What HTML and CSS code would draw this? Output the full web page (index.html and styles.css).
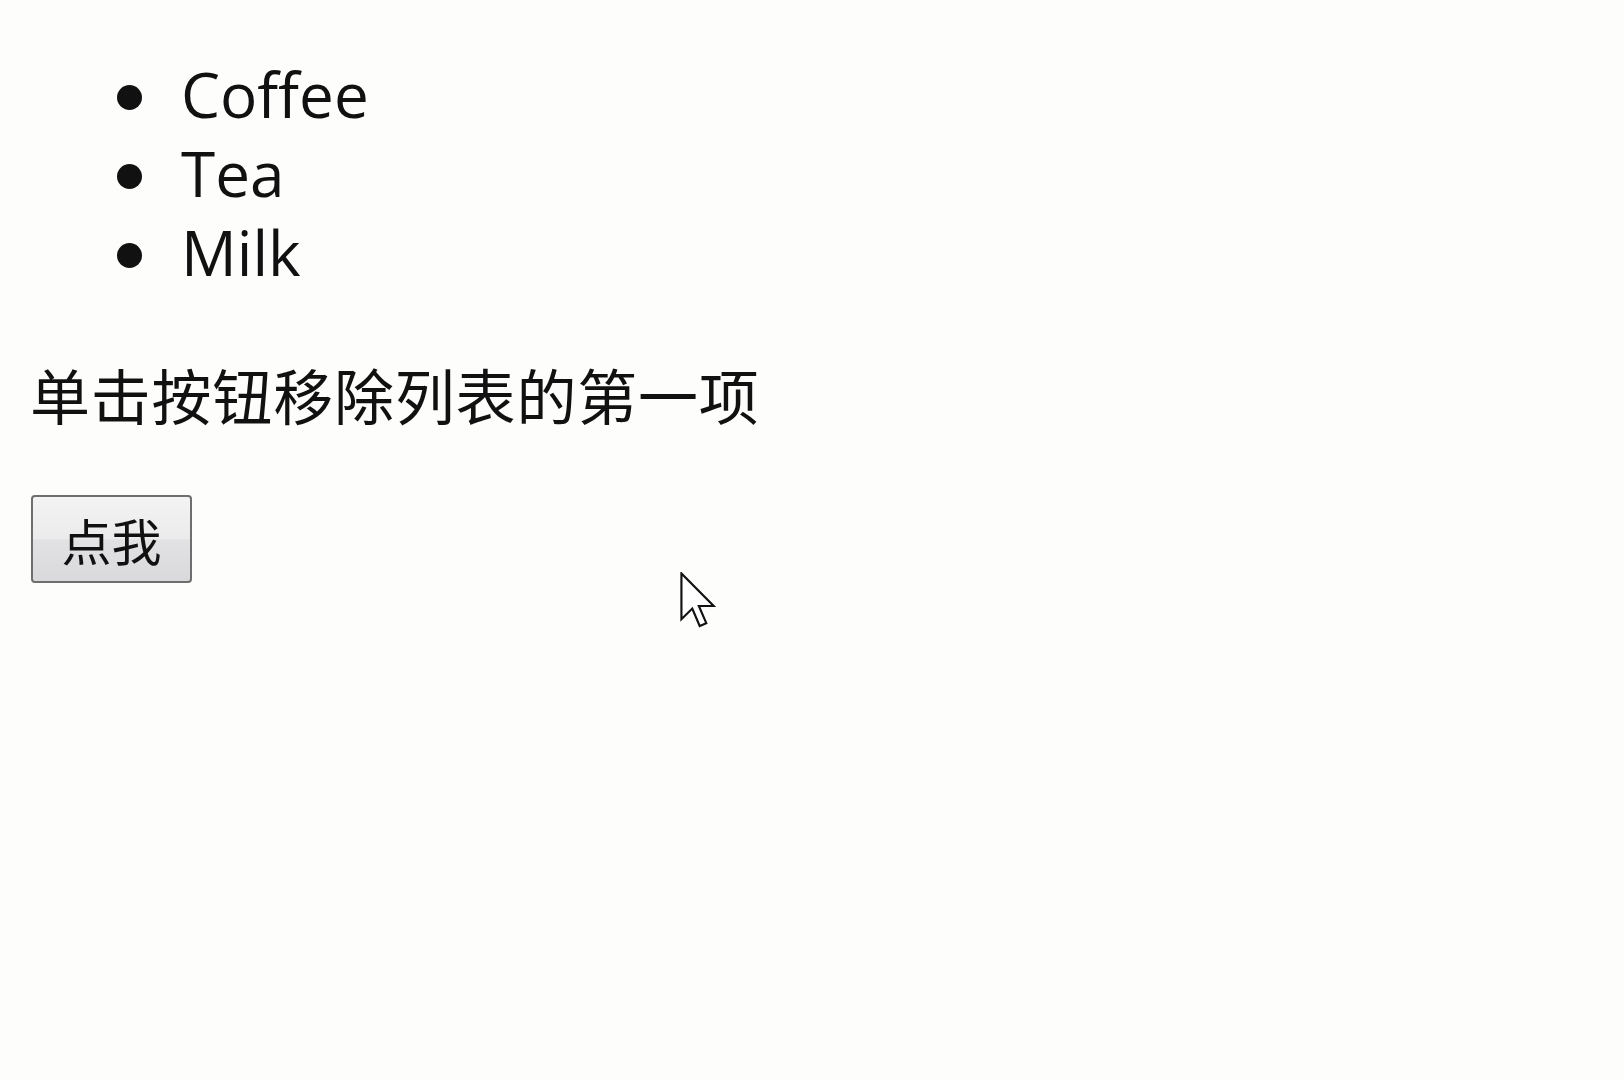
FILE: index.html
```html
<!DOCTYPE html>
<html lang="zh-CN">
<head>
<meta charset="utf-8">
<title>移除列表项</title>
<link rel="stylesheet" href="styles.css">
</head>
<body>
<ul class="drinks">
  <li>Coffee</li>
  <li>Tea</li>
  <li>Milk</li>
</ul>
<p class="hint">单击按钮移除列表的第一项</p>
<button class="btn" type="button">点我</button>
<svg class="cursor" width="36" height="56" viewBox="0 0 12.6 19.6" aria-hidden="true">
  <path d="M0.5 0.5 L0.5 16.5 L4.3 12.8 L6.9 18.9 L9.2 17.9 L6.6 11.9 L11.8 11.9 Z" fill="#ffffff" stroke="#111111" stroke-width="0.75" stroke-linejoin="miter"/>
</svg>
</body>
</html>
```

FILE: styles.css
```css
html {
  background-color: #fdfdfb;
  min-height: 100%;
}

body {
  margin: 0;
  padding: 55px 30px 0;
  font-family: "Open Sans", "Noto Sans CJK SC", sans-serif;
  color: #111111;
  position: relative;
  min-height: 1025px;
}

.drinks {
  margin: 0 0 58px;
  padding-left: 151px;
  font-size: 62px;
  line-height: 79px;
  list-style: none;
}

.drinks li::before {
  content: "";
  display: inline-block;
  width: 25px;
  height: 25px;
  border-radius: 50%;
  background: #111111;
  margin-left: -64px;
  margin-right: 39px;
  vertical-align: 8px;
}

.hint {
  margin: 0 0 61px;
  padding-top: 4px;
  font-family: "Noto Sans CJK SC", sans-serif;
  font-size: 60px;
  letter-spacing: 0.8px;
  line-height: 80px;
}

.btn {
  display: block;
  margin-left: 1px;
  width: 161px;
  height: 88px;
  padding: 0;
  font-family: "Noto Sans CJK SC", sans-serif;
  font-size: 50px;
  line-height: 1;
  color: #111111;
  border: 2px solid #6e6e6e;
  border-radius: 4px;
  background: linear-gradient(to bottom, #f3f3f3 0%, #ebebeb 50%, #e2e2e4 51%, #d9d9dc 100%);
}

.cursor {
  position: absolute;
  left: 680px;
  top: 572px;
}
```
